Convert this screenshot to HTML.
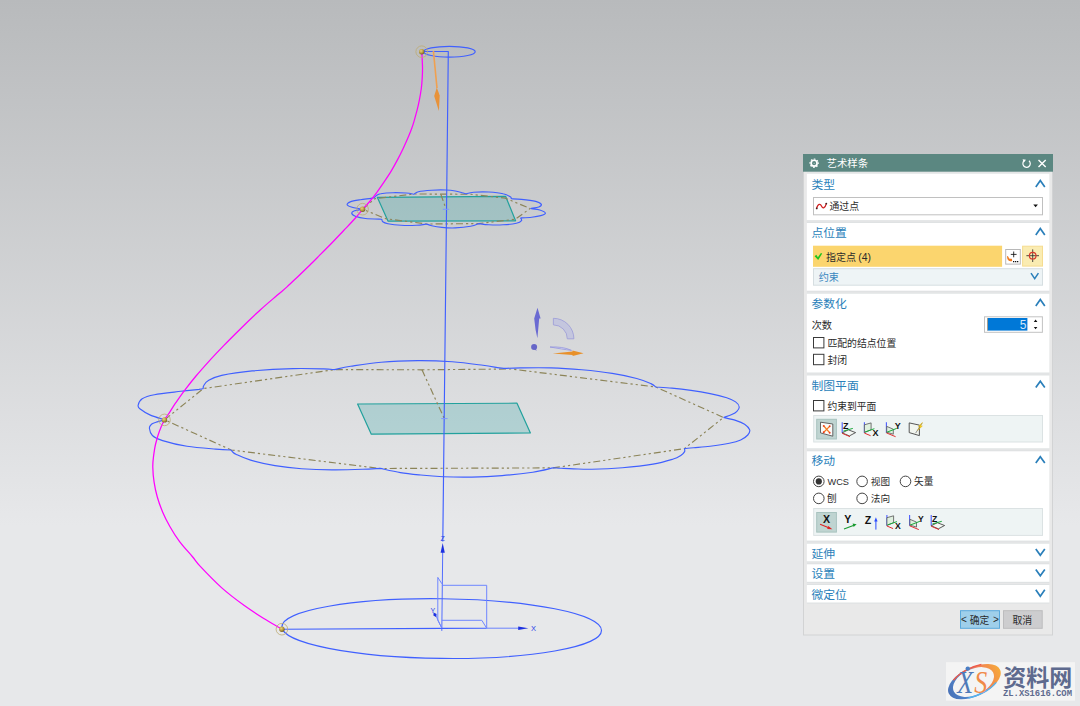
<!DOCTYPE html>
<html><head><meta charset="utf-8"><title>NX</title>
<style>html,body{margin:0;padding:0;background:#e8e9ea;overflow:hidden}body{width:1080px;height:706px;font-family:"Liberation Sans",sans-serif}svg{display:block}</style>
</head><body>
<svg width="1080" height="706" viewBox="0 0 1080 706">
<defs><linearGradient id="bg" x1="0" y1="0" x2="0" y2="1">
<stop offset="0" stop-color="#b8babc"/><stop offset=".745" stop-color="#e7e8ea"/><stop offset="1" stop-color="#e7e8ea"/></linearGradient></defs>
<rect width="1080" height="706" fill="url(#bg)"/>
<g fill="none" stroke-linecap="butt" stroke-linejoin="round">
<path d="M377.3 197.3L505.6 196.3L515.6 220.8L388.1 221.2Z" fill="rgba(0,150,150,.2)" stroke="#22a19d" stroke-width="1.2"/>
<path d="M357.6 404L517 403.2L530.4 432.9L371.3 434.2Z" fill="rgba(0,150,150,.2)" stroke="#22a19d" stroke-width="1.2"/>
<g stroke="#8c8458" stroke-width="1.15" stroke-dasharray="7 3 2.2 3 2.2 3">
<path d="M164.6 419.8L203.3 388.6L334.4 369.6L422 369.8L511 369L655.7 387L723.5 417.5L684.4 448.6L553 467.9L380 468.5L231.2 450Z"/>
<path d="M422 369.8L444.3 418.5"/>
<path d="M362.6 209.2L374.6 198.8L413.8 194L440.8 194.1L470.6 194.3L505.2 198.1L530.1 208.5L515.4 219.2L478.7 223.6L426.6 224L385.8 218.7Z"/>
<path d="M440.8 194.3L445.9 208.5"/>
</g>
<g stroke="#4060ff" stroke-width="1.15">
<path d="M164.6 419.8C162.2 419 154.5 416.9 150.4 415.1C146.3 413.3 142.2 410.6 140.2 409C138.1 407.4 137.8 407.2 138.1 405.5C138.4 403.8 139.5 400.6 142.2 398.8C144.9 397 147.9 395.9 154.4 394.7C160.9 393.4 173.5 392.2 180.9 391.3C188.3 390.4 195.3 389.8 199 389.4C202.7 388.9 202.6 388.7 203.3 388.6M203.3 388.6C203.4 388.1 202.8 387 203.7 385.6C204.5 384.2 205.4 382.2 208.4 380.5C211.4 378.8 214.4 377 221.7 375.4C229 373.8 240.3 372 252.2 370.9C264.1 369.8 281.1 368.9 293 368.6C304.9 368.3 316.6 368.7 323.5 368.9C330.4 369.1 332.6 369.5 334.4 369.6M334.4 369.6C337.1 369.1 342.8 367.5 350.6 366.3C358.4 365.1 369.9 363.1 381.1 362.2C392.3 361.2 405.9 360.7 417.8 360.6C429.7 360.5 441.5 361 452.4 361.8C463.3 362.6 475.2 364.3 483 365.3C490.8 366.3 495.7 367.4 499.3 367.9C502.9 368.4 503.7 368.3 504.6 368.4M504.6 368.4C507.3 368.3 512.9 368 520.6 367.9C528.4 367.8 540.9 367.6 551.1 367.9C561.3 368.2 571.5 368.9 581.7 369.8C591.9 370.7 603 371.9 612.2 373.4C621.4 374.8 630.2 376.8 636.7 378.5C643.2 380.2 647.7 382.2 650.9 383.6C654.1 385 654.9 386.4 655.7 387M655.7 387C658.4 387.2 666 387.5 671.9 388.1C677.8 388.7 684.6 389.5 691 390.4C697.4 391.3 704.1 392.4 710.1 393.6C716.1 394.8 722.5 396.4 726.7 397.8C731 399.2 733.5 400.4 735.6 401.9C737.7 403.4 739 405.4 739.2 407C739.4 408.6 738.1 410.1 736.9 411.4C735.7 412.7 734 413.6 731.8 414.6C729.6 415.6 724.9 417 723.5 417.5M723.5 417.5C725.5 418 732.1 419.3 735.6 420.4C739.1 421.5 742.2 422.6 744.6 424.2C747 425.8 749.2 428.1 749.7 429.9C750.2 431.7 749.3 433.3 747.8 435C746.3 436.7 743.8 438.5 740.7 439.9C737.6 441.3 734.4 442.2 729.3 443.3C724.2 444.4 716 445.6 710.1 446.3C704.2 447.1 697.9 447.4 693.6 447.8C689.3 448.2 685.9 448.5 684.4 448.6M684.4 448.6C684.4 449.1 685.2 450.5 684.6 451.6C684 452.7 682.7 454.2 680.8 455.4C678.9 456.6 677.9 457.6 673.3 459C668.7 460.4 661.5 462.7 653 464.1C644.5 465.6 632.6 466.9 622.4 467.7C612.2 468.5 600 469 591.9 469.2C583.8 469.4 578.6 469 573.5 468.9C568.4 468.8 564.7 468.5 561.3 468.3C557.9 468.1 554.4 468 553 467.9M553 467.9C549.6 468.6 541.3 470.9 532.8 472.2C524.3 473.5 512.4 474.8 502.2 475.6C492 476.4 481.5 476.9 471.7 477.1C461.9 477.3 451.6 477.1 443.1 476.7C434.6 476.3 427.8 475.7 420.7 475C413.6 474.3 407.1 473.7 400.4 472.6C393.7 471.5 383.8 469.1 380.5 468.4M380.5 468.4C377.5 468.5 370.7 469.1 362.6 469.3C354.5 469.6 342.2 470 332 469.9C321.8 469.8 311 469.4 301.5 468.7C292 468 283.5 467 275 465.6C266.5 464.2 257.1 462 250.6 460.1C244.2 458.2 239.3 455.8 236.3 454.4C233.3 453 233.3 452.5 232.5 451.8C231.7 451.1 231.4 450.3 231.2 450M231.2 450C228.6 449.9 223 449.7 215.6 449.1C208.2 448.5 195.8 447.7 187 446.3C178.2 444.9 168.4 442.4 162.6 440.6C156.8 438.8 154.6 437.6 152.4 435.5C150.2 433.4 149.6 430.2 149.4 428.3C149.2 426.4 150.4 425.3 151.5 424.3C152.6 423.3 153.8 423.1 156 422.3C158.2 421.6 163.2 420.2 164.6 419.8"/>
<path d="M362.6 209.2C361.2 209 356.6 208.5 354 207.8C351.4 207.1 347.9 206 347.3 205C346.7 204 348 202.8 350.2 201.9C352.4 201 356.9 200.3 360.4 199.7C363.9 199.1 368.7 198.8 371 198.4C373.3 198.1 373.8 197.7 374.4 197.6M374.4 197.6C374.8 197.2 375.4 196.1 376.5 195.5C377.6 194.9 377.9 194.2 380.7 193.8C383.4 193.3 388.8 192.8 393 192.7C397.2 192.6 402.7 192.8 406.2 193C409.7 193.2 412.8 194 414.1 194.2M414.1 194.2C414.8 193.8 415.5 192.4 418.4 191.7C421.3 191 427.1 190.5 431.7 190.2C436.3 189.9 442 189.9 445.9 190C449.8 190.1 452.6 190.5 455.3 191C458 191.5 460.2 192.3 462 192.8C463.8 193.3 465.3 193.6 466 193.8M466 193.8C467.3 193.5 469.8 192.5 473.6 192.2C477.4 191.9 484 191.7 488.9 192C493.8 192.3 499.5 192.9 503.1 193.8C506.7 194.6 508.9 196 510.3 196.8C511.7 197.6 511.1 198.5 511.3 198.8M511.3 198.8C513 198.9 517.4 199 521.5 199.4C525.6 199.8 532.4 200.6 535.7 201.4C539 202.2 540.8 203.5 541.3 204.4C541.8 205.3 540.6 206.3 538.8 207C537 207.7 532 208.2 530.6 208.5M530.6 208.5C532.1 208.8 537.3 209.2 539.8 210C542.3 210.8 545.2 212.2 545.4 213.1C545.6 214 543.1 214.9 540.8 215.6C538.5 216.3 535.1 216.8 531.7 217.2C528.3 217.6 522.4 217.8 520.5 217.9M520.5 217.9C520.7 218.4 522.2 219.8 521.5 220.7C520.8 221.6 519.5 222.6 516.4 223.3C513.3 224 507.7 224.6 503.1 224.8C498.5 225.1 493 225 488.9 224.8C484.8 224.6 480.4 223.8 478.7 223.6M478.7 223.6C477.4 224.1 474.5 225.6 470.6 226.3C466.7 227 460.1 227.7 455.3 227.9C450.5 228.1 445.8 227.8 441.9 227.4C438 227.1 434.2 226.4 431.7 225.8C429.1 225.2 427.5 224.3 426.6 224M426.6 224C424.9 224.2 420.6 225.1 416.4 225.3C412.1 225.5 405.9 225.6 401.1 225.3C396.4 225.1 390.9 224.4 387.9 223.8C384.8 223.2 383.8 222.6 382.8 221.8C381.8 221 382 219.6 381.8 219.2M381.8 219.2C379.1 219.1 369.9 219 365.5 218.5C361.1 218 357.6 217.1 355.3 216.2C353 215.3 351.8 214 351.7 213.1C351.6 212.2 352.7 211.5 354.5 210.8C356.3 210.2 361.2 209.5 362.6 209.2"/>
<ellipse cx="449.4" cy="51.7" rx="25.8" ry="5.4"/>
<path d="M424 51.5L448.3 51.5L442.8 541.5"/>
<path d="M442.7 552L441.8 630.9" stroke="#4a66ff" stroke-width=".95"/>
<circle r="1" transform="matrix(159.8 1.84 0 29.84 441.7 628.6)" vector-effect="non-scaling-stroke"/>
<path d="M282 629.2L441.8 628.3L486.7 628.2"/>
<path d="M486.7 628.2L518.5 628.2" stroke="#5f78ff" stroke-width=".9"/>
</g>
<g stroke="#6f86ff" stroke-width="1">
<path d="M441.9 585.3L486.7 585.3L486.7 628.2M437.8 577.4L441.9 583.8M437.8 577.4L437.8 620.3L441.9 628.2M441.9 620.3L481.8 620.3L486.7 628.2M435.4 614.6L441.5 627.5"/>
<path d="M442.8 209.3L449.2 209.3M441.2 418.6L447.6 418.6" stroke="#7f97ff"/>
</g>
<path d="M518.2 626.4L528.4 628.2L518.2 630Z" fill="#1c30e0"/>
<path d="M442.7 543L444.8 552.8L440.6 552.8Z" fill="#1c30e0"/>
<path d="M433.6 612.5L436.6 614L436 617L433.4 615.5Z" fill="#1c30e0"/>
</g>
<g font-family="Liberation Sans, sans-serif" font-size="7.5" fill="#2a3fe8"><text x="530.9" y="631.4">X</text><text x="440.4" y="540.8" font-size="7">Z</text><text x="430.6" y="613" font-size="7">Y</text></g>
<path d="M421.9 53C422 55.3 422.4 62.8 422.5 67C422.6 71.2 422.4 74.7 422.2 78.3C422 81.9 421.8 84.9 421.3 88.5C420.8 92.1 420.1 96.3 419.4 99.9C418.7 103.5 418 106.7 417.1 110.1C416.2 113.5 415.2 117.1 414.3 120.3C413.4 123.5 412.4 126.6 411.4 129.3C410.4 132 409.8 133.4 408.5 136.5C407.2 139.6 405.2 144.1 403.4 147.9C401.6 151.7 399.7 155.6 397.7 159.4C395.7 163.2 393.5 167.2 391.3 170.9C389.1 174.6 386.7 178.1 384.3 181.7C381.9 185.3 379.1 189.3 376.7 192.6C374.3 195.9 372 198.7 369.7 201.5C367.4 204.3 365.2 206.4 362.8 209.2C360.4 212 358.2 214.9 355 218.5C351.8 222.1 347.5 226.5 343.7 230.5C339.9 234.5 336.1 238.6 332.3 242.5C328.5 246.4 324.8 250.1 321 253.9C317.2 257.7 313.5 261.5 309.7 265.2C305.9 268.9 302.1 272.6 298.3 276.2C294.5 279.8 290.5 283.7 287 286.9C283.5 290.1 281.5 291.5 277.1 295.3C272.7 299.1 266.3 304.4 260.5 309.7C254.7 315 248.2 321.2 242.1 327.2C236 333.2 229.2 339.9 223.7 345.6C218.2 351.3 213.5 356.2 208.9 361.3C204.3 366.4 200 371.2 196 376C192 380.8 188.4 385.4 185 389.8C181.6 394.2 178.4 398.9 175.8 402.7C173.2 406.5 171.2 410 169.3 412.9C167.4 415.8 166.2 416.8 164.5 419.8C162.8 422.9 160.9 427.2 159.4 431.2C157.9 435.2 156.6 439.8 155.6 444C154.6 448.2 154 452.8 153.5 456.7C153 460.6 152.7 463.1 152.8 467.3C152.9 471.6 153.3 477.2 154.1 482.2C154.8 487.1 155.9 492.1 157.3 497C158.7 501.9 160.5 506.9 162.6 511.9C164.7 516.9 167.2 521.8 170 526.7C172.8 531.7 175.9 536.6 179.6 541.6C183.3 546.6 188.9 552.4 192.3 556.5C195.8 560.6 195.4 561.2 200.3 566.4C205.2 571.6 214.2 581.1 221.5 587.6C228.8 594.1 237.2 600.4 244.3 605.5C251.4 610.6 257.6 614.6 263.8 618.5C270 622.4 278.6 627.2 281.5 629" fill="none" stroke="#ff00ff" stroke-width="1.25"/>
<path d="M433.4 51L437 88" stroke="#f0a050" stroke-width="1.6" fill="none"/>
<path d="M436.8 87.5L439.7 95.5L438.9 111L434.2 96Z" fill="#e8923a"/>
<defs><radialGradient id="gb" cx=".38" cy=".35" r=".7"><stop offset="0" stop-color="#ecd27a"/><stop offset=".55" stop-color="#b89a3e"/><stop offset="1" stop-color="#6e5a20"/></radialGradient></defs>
<circle cx="421.7" cy="51.7" r="5.8" fill="none" stroke="#bcab72" stroke-width=".8"/>
<circle cx="421.7" cy="51.7" r="2.7" fill="url(#gb)"/>
<circle cx="362.6" cy="209.2" r="5.8" fill="none" stroke="#bcab72" stroke-width=".8"/>
<circle cx="362.6" cy="209.2" r="2.7" fill="url(#gb)"/>
<circle cx="164.5" cy="419.9" r="5.8" fill="none" stroke="#bcab72" stroke-width=".8"/>
<circle cx="164.5" cy="419.9" r="2.7" fill="url(#gb)"/>
<circle cx="281.9" cy="629.2" r="5.8" fill="none" stroke="#bcab72" stroke-width=".8"/>
<circle cx="281.9" cy="629.2" r="2.7" fill="url(#gb)"/>
<path d="M537.5 307.7L540.6 318.6L539.2 318.6L537.4 338.2L535.6 330L534.2 318.6Z" fill="#6a6ad2"/>
<path d="M553.4 318.3A20.5 20.5 0 0 1 573.9 338.8L567.3 338.8A13.9 13.9 0 0 0 553.4 324.9Z" fill="#c4c6de" stroke="#9a9ad8" stroke-width=".8"/>
<circle cx="534.1" cy="347" r="3" fill="#6666c8"/><path d="M534.5 349L536.5 351L535.8 348Z" fill="#6666c8"/>
<path d="M550 347C558 346.6 566 347.6 571.5 350.4C565 349.6 558 348.4 550 347Z" fill="#d5d8ee" stroke="#8c8cdc" stroke-width=".7"/>
<path d="M552.7 353.5L572.6 351.6L572.4 350.6L583.6 353.2L572.6 355.9L572.6 354.9Z" fill="#e8902a"/>
<rect x="803.5" y="154.5" width="249" height="480.5" fill="#e9e9e9" stroke="#d2d3d4" stroke-width="1" />
<rect x="803" y="154" width="250" height="17.7" fill="#5b8781" />
<rect x="806.8" y="172.5" width="242.6" height="48.9" fill="#dfe2e3" />
<rect x="806.8" y="173.7" width="242.6" height="46.5" fill="#fff" />
<rect x="806.8" y="221.8" width="242.6" height="70.1" fill="#dfe2e3" />
<rect x="806.8" y="223" width="242.6" height="67.7" fill="#fff" />
<rect x="806.8" y="292.5" width="242.6" height="81.2" fill="#dfe2e3" />
<rect x="806.8" y="293.7" width="242.6" height="78.8" fill="#fff" />
<rect x="806.8" y="374.3" width="242.6" height="75.2" fill="#dfe2e3" />
<rect x="806.8" y="375.5" width="242.6" height="72.8" fill="#fff" />
<rect x="806.8" y="450.1" width="242.6" height="91.7" fill="#dfe2e3" />
<rect x="806.8" y="451.3" width="242.6" height="89.3" fill="#fff" />
<rect x="806.8" y="542.5" width="242.6" height="20" fill="#dfe2e3" />
<rect x="806.8" y="543.7" width="242.6" height="17.6" fill="#fff" />
<rect x="806.8" y="563.1" width="242.6" height="19.9" fill="#dfe2e3" />
<rect x="806.8" y="564.3" width="242.6" height="17.5" fill="#fff" />
<rect x="806.8" y="583.8" width="242.6" height="19.9" fill="#dfe2e3" />
<rect x="806.8" y="585" width="242.6" height="17.5" fill="#fff" />
<circle cx="814.1" cy="163.2" r="2.95" fill="none" stroke="#fff" stroke-width="1.7"/>
<circle cx="814.1" cy="163.2" r="4.15" fill="none" stroke="#fff" stroke-width="1.1" stroke-dasharray="1.63 1.63" transform="rotate(-11 814.1 163.2)"/>
<circle cx="814.1" cy="163.2" r=".5" fill="#dfe9e7"/>
<text x="826.5" y="167.3" font-family="'Liberation Sans', 'Noto Sans CJK SC', sans-serif" font-size="10.4" fill="#fff">艺术样条</text>
<path d="M1024.4 160.6A3.7 3.7 0 1 0 1029 160.8" fill="none" stroke="#fff" stroke-width="1.2"/><path d="M1022.6 159.2L1026 159.8L1023.8 162.4Z" fill="#fff"/>
<path d="M1038.5 159.9L1045.7 167.1M1045.7 159.9L1038.5 167.1" stroke="#fff" stroke-width="1.4"/>
<text x="811.5" y="189.1" font-family="'Liberation Sans', 'Noto Sans CJK SC', sans-serif" font-size="11.8" fill="#2a7fba">类型</text>
<path d="M1035.8 186.9 L1040.3 180.5 L1044.8 186.9" fill="none" stroke="#2a7fba" stroke-width="1.7"/>
<text x="811.5" y="237.1" font-family="'Liberation Sans', 'Noto Sans CJK SC', sans-serif" font-size="11.8" fill="#2a7fba">点位置</text>
<path d="M1035.8 234.9 L1040.3 228.5 L1044.8 234.9" fill="none" stroke="#2a7fba" stroke-width="1.7"/>
<text x="811.5" y="308.1" font-family="'Liberation Sans', 'Noto Sans CJK SC', sans-serif" font-size="11.8" fill="#2a7fba">参数化</text>
<path d="M1035.8 305.9 L1040.3 299.5 L1044.8 305.9" fill="none" stroke="#2a7fba" stroke-width="1.7"/>
<text x="811.5" y="389.7" font-family="'Liberation Sans', 'Noto Sans CJK SC', sans-serif" font-size="11.8" fill="#2a7fba">制图平面</text>
<path d="M1035.8 387.6 L1040.3 381.2 L1044.8 387.6" fill="none" stroke="#2a7fba" stroke-width="1.7"/>
<text x="811.5" y="465.3" font-family="'Liberation Sans', 'Noto Sans CJK SC', sans-serif" font-size="11.8" fill="#2a7fba">移动</text>
<path d="M1035.8 463.1 L1040.3 456.7 L1044.8 463.1" fill="none" stroke="#2a7fba" stroke-width="1.7"/>
<text x="811.5" y="557.9" font-family="'Liberation Sans', 'Noto Sans CJK SC', sans-serif" font-size="11.8" fill="#2a7fba">延伸</text>
<path d="M1035.8 548.9 L1040.3 555.3 L1044.8 548.9" fill="none" stroke="#2a7fba" stroke-width="1.7"/>
<text x="811.5" y="578.3" font-family="'Liberation Sans', 'Noto Sans CJK SC', sans-serif" font-size="11.8" fill="#2a7fba">设置</text>
<path d="M1035.8 569.4 L1040.3 575.8 L1044.8 569.4" fill="none" stroke="#2a7fba" stroke-width="1.7"/>
<text x="811.5" y="598.8" font-family="'Liberation Sans', 'Noto Sans CJK SC', sans-serif" font-size="11.8" fill="#2a7fba">微定位</text>
<path d="M1035.8 589.8 L1040.3 596.2 L1044.8 589.8" fill="none" stroke="#2a7fba" stroke-width="1.7"/>
<rect x="813.5" y="197.5" width="229" height="17.3" fill="#fff" stroke="#c0c0c0" stroke-width="1" />
<path d="M816.6 208.6C818 203.2 820.4 203.6 821.6 206.2C822.8 208.8 825 208.4 826.4 203.4" fill="none" stroke="#d02020" stroke-width="1.3"/>
<circle cx="816.7" cy="208.4" r=".9" fill="#402020"/><circle cx="826.3" cy="203.6" r=".9" fill="#402020"/>
<text x="829.4" y="209.7" font-family="'Liberation Sans', 'Noto Sans CJK SC', sans-serif" font-size="9.9" fill="#2b2b2b">通过点</text>
<path d="M1033.3 204.6L1037.9 204.6L1035.6 207.3Z" fill="#111"/>
<rect x="813" y="245.7" width="189.1" height="21.1" fill="#fbd56e" />
<path d="M814.6 256.2L816.3 254.8L817.9 257.2L820.9 252.9L822.2 253.6L818.2 260.1Z" fill="#1fc41f"/>
<text x="825.9" y="260.7" font-family="'Liberation Sans', 'Noto Sans CJK SC', sans-serif" font-size="10" fill="#2b2b2b">指定点</text>
<text x="858.3" y="260.6" font-family="Liberation Sans, sans-serif" font-size="10.4" fill="#2b2b2b">(4)</text>
<rect x="1005.7" y="249.5" width="14.6" height="14.6" fill="#fff" stroke="#b8b8b8" stroke-width="1" />
<path d="M1010.8 254.4L1016.6 254.4M1013.7 251.5L1013.7 257.3" stroke="#111" stroke-width=".85"/>
<path d="M1013 261.1h1.3v1.2h-1.3zM1015 261.1h1.3v1.2h-1.3zM1017 261.1h1.3v1.2h-1.3z" fill="#111"/>
<path d="M1007.6 256.6C1007.6 259.6 1009 261 1011.6 260.6L1011.4 259.2L1009.6 259.4C1008.6 259 1008.2 258 1007.6 256.6Z" fill="#f07a20" stroke="#f07a20" stroke-width="1.1" stroke-linejoin="round"/>
<rect x="1022.6" y="246.2" width="19.9" height="19.9" fill="#faecb2" stroke="#f6dc90" stroke-width="1" />
<path d="M1026.4 255.7L1039 255.7M1032.7 249.4L1032.7 262" stroke="#2a2a2a" stroke-width=".85"/><circle cx="1032.7" cy="255.7" r="3.3" fill="none" stroke="#d8392b" stroke-width="1.2"/>
<rect x="813.5" y="268.7" width="229" height="16.5" fill="#eef4f6" stroke="#d6dee1" stroke-width="1" />
<text x="818.7" y="280.7" font-family="'Liberation Sans', 'Noto Sans CJK SC', sans-serif" font-size="10.1" fill="#3a87bf">约束</text>
<path d="M1031 273.2 L1034.7 278.6 L1038.4 273.2" fill="none" stroke="#2a7fba" stroke-width="1.5"/>
<text x="811.7" y="328.5" font-family="'Liberation Sans', 'Noto Sans CJK SC', sans-serif" font-size="10.2" fill="#2b2b2b">次数</text>
<rect x="984.5" y="316.8" width="57.9" height="15.5" fill="#fff" stroke="#c2c2c2" stroke-width="1" />
<rect x="987.2" y="318" width="40.2" height="12.6" fill="#0078d7" />
<rect x="987.2" y="318" width="0.6" height="12.6" fill="#f0a860" />
<text x="1026.5" y="328.6" text-anchor="end" font-family="Liberation Sans, sans-serif" font-size="12" fill="#d4e7f8">5</text>
<path d="M1033.8 321.9L1037.4 321.9L1035.6 319.6ZM1033.8 327L1037.4 327L1035.6 329.3Z" fill="#111"/>
<rect x="813.5" y="337.5" width="10.4" height="10.4" fill="#fff" stroke="#3a3a3a" stroke-width="1" />
<text x="827.4" y="346.6" font-family="'Liberation Sans', 'Noto Sans CJK SC', sans-serif" font-size="9.85" fill="#2b2b2b">匹配的结点位置</text>
<rect x="813.5" y="354.3" width="10.4" height="10.4" fill="#fff" stroke="#3a3a3a" stroke-width="1" />
<text x="827.4" y="363.6" font-family="'Liberation Sans', 'Noto Sans CJK SC', sans-serif" font-size="9.85" fill="#2b2b2b">封闭</text>
<rect x="813.5" y="400.5" width="10.4" height="10.4" fill="#fff" stroke="#3a3a3a" stroke-width="1" />
<text x="827.4" y="409.7" font-family="'Liberation Sans', 'Noto Sans CJK SC', sans-serif" font-size="9.75" fill="#2b2b2b">约束到平面</text>
<rect x="813.7" y="415.5" width="228.8" height="26.5" fill="#eef4f4" stroke="#dbe2e3" stroke-width="1" />
<rect x="813.7" y="508.5" width="228.8" height="26.9" fill="#eef4f4" stroke="#dbe2e3" stroke-width="1" />
<rect x="816.7" y="419.3" width="19.7" height="19.7" fill="#bfd4d1" stroke="#a8c3bf" stroke-width="1" />
<rect x="816.7" y="512.5" width="19.7" height="19.6" fill="#bfd4d1" stroke="#a8c3bf" stroke-width="1" />
<path d="M820.5 422.2L832.8 424L832.8 436.2L820.5 432.9Z" fill="#fafaf8" stroke="#555" stroke-width=".9"/>
<path d="M823.8 426L829.6 432.6M829.6 426.4L823.8 432.2" stroke="#f47a20" stroke-width="1.25"/><circle cx="823.7" cy="425.9" r=".95" fill="#ee3a1a"/><circle cx="829.7" cy="432.7" r=".95" fill="#ee3a1a"/><circle cx="829.7" cy="426.3" r=".95" fill="#ee3a1a"/><circle cx="823.7" cy="432.3" r=".95" fill="#ee3a1a"/>
<path d="M842.2 422.2L842.2 432.9" stroke="#4a5cff" stroke-width="1.1"/><path d="M842.2 432.9L848.3 429.8L855.6 432.6L849.4 435.9Z" fill="#f4f8f4" stroke="#333" stroke-width=".8"/><path d="M843.3 431.1L852.8 428.4" stroke="#1aa83a" stroke-width="1"/><path d="M842.2 433.3L850 436.7" stroke="#e03030" stroke-width="1"/><text x="843.1" y="428.8" font-family="Liberation Sans, sans-serif" font-weight="bold" font-size="9" fill="#111">Z</text>
<path d="M864.4 422.2L864.4 432.9" stroke="#4a5cff" stroke-width="1.1"/><path d="M864.4 424.8L871.1 422.9L871.1 429.8L864.4 432.6Z" fill="#dff0df" stroke="#555" stroke-width=".8"/><path d="M865 432L874.4 428.7" stroke="#1aa83a" stroke-width="1"/><path d="M864.4 433.1L870.6 435.7" stroke="#e03030" stroke-width="1"/><text x="872.6" y="436.3" font-family="Liberation Sans, sans-serif" font-weight="bold" font-size="9" fill="#111">X</text>
<path d="M886.4 422.2L886.4 432.9" stroke="#4a5cff" stroke-width="1.1"/><path d="M886.7 426.4L893.3 429.2L893.3 434.2L886.7 432.2Z" fill="#dff0df" stroke="#555" stroke-width=".8"/><path d="M886.7 432.3L896.7 428.4" stroke="#1aa83a" stroke-width="1"/><path d="M886.4 432.9L895.6 436.7" stroke="#e03030" stroke-width="1"/><text x="894.8" y="428.8" font-family="Liberation Sans, sans-serif" font-weight="bold" font-size="9" fill="#111">Y</text>
<path d="M909.2 422.9L919.4 425.1L919.4 435.6L909.2 432.6Z" fill="#f2f6f0" stroke="#444" stroke-width=".9"/>
<path d="M922.2 423L915.6 433.2" stroke="#666" stroke-width=".7"/><path d="M922.6 422.4L918.4 426.2L920.2 426.8L917.6 430.4L922.4 426L920.4 425.4Z" fill="#f6cc1e" stroke="#dcae08" stroke-width=".4"/>
<text x="822.9" y="523" font-family="Liberation Sans, sans-serif" font-weight="bold" font-size="10.6" fill="#111">X</text>
<path d="M820.1 524.2L830 528.2" stroke="#e02020" stroke-width="1.1"/><path d="M828.2 526L832.4 529.2L827.2 529Z" fill="#e02020"/>
<text x="844.2" y="523" font-family="Liberation Sans, sans-serif" font-weight="bold" font-size="10.6" fill="#111">Y</text>
<path d="M844 529L854 525.2" stroke="#189a30" stroke-width="1.1"/><path d="M852.6 523.6L856.6 524.2L853.6 527Z" fill="#189a30"/>
<text x="864.7" y="523.6" font-family="Liberation Sans, sans-serif" font-weight="bold" font-size="10.6" fill="#111">Z</text>
<path d="M875.9 529.6L875.9 520" stroke="#2a4cff" stroke-width="1"/><path d="M874.2 521.4L875.9 517.2L877.6 521.4Z" fill="#2a4cff"/>
<path d="M886.9 515.1L886.9 525.8" stroke="#4a5cff" stroke-width="1.1"/><path d="M886.9 517.7L893.6 515.8L893.6 522.7L886.9 525.5Z" fill="#dff0df" stroke="#555" stroke-width=".8"/><path d="M887.5 524.9L896.9 521.6" stroke="#1aa83a" stroke-width="1"/><path d="M886.9 526L893.1 528.6" stroke="#e03030" stroke-width="1"/><text x="895.1" y="529.2" font-family="Liberation Sans, sans-serif" font-weight="bold" font-size="8.6" fill="#111">X</text>
<path d="M909.6 515.1L909.6 525.8" stroke="#4a5cff" stroke-width="1.1"/><path d="M909.9 519.3L916.5 522.1L916.5 527.1L909.9 525.1Z" fill="#dff0df" stroke="#555" stroke-width=".8"/><path d="M909.9 525.2L919.9 521.3" stroke="#1aa83a" stroke-width="1"/><path d="M909.6 525.8L918.8 529.6" stroke="#e03030" stroke-width="1"/><text x="918" y="521.7" font-family="Liberation Sans, sans-serif" font-weight="bold" font-size="8.6" fill="#111">Y</text>
<path d="M931.2 515.1L931.2 525.8" stroke="#4a5cff" stroke-width="1.1"/><path d="M931.2 525.8L937.3 522.7L944.6 525.5L938.4 528.8Z" fill="#f4f8f4" stroke="#333" stroke-width=".8"/><path d="M932.3 524L941.8 521.3" stroke="#1aa83a" stroke-width="1"/><path d="M931.2 526.2L939 529.6" stroke="#e03030" stroke-width="1"/><text x="932.1" y="521.7" font-family="Liberation Sans, sans-serif" font-weight="bold" font-size="8.6" fill="#111">Z</text>
<circle cx="818.8" cy="481.4" r="5.3" fill="#fff" stroke="#444" stroke-width="1"/><circle cx="818.8" cy="481.4" r="3.1" fill="#333"/>
<text x="827.5" y="485.1" font-family="Liberation Sans, sans-serif" font-size="9.9" textLength="21.5" lengthAdjust="spacingAndGlyphs" fill="#2b2b2b">WCS</text>
<circle cx="862.1" cy="481.4" r="5.3" fill="#fff" stroke="#444" stroke-width="1"/>
<text x="870.8" y="485.3" font-family="'Liberation Sans', 'Noto Sans CJK SC', sans-serif" font-size="9.6" fill="#2b2b2b">视图</text>
<circle cx="905.5" cy="481.4" r="5.3" fill="#fff" stroke="#444" stroke-width="1"/>
<text x="914.1" y="485.4" font-family="'Liberation Sans', 'Noto Sans CJK SC', sans-serif" font-size="9.7" fill="#2b2b2b">矢量</text>
<circle cx="818.8" cy="498.4" r="5.3" fill="#fff" stroke="#444" stroke-width="1"/>
<text x="827.1" y="502.4" font-family="'Liberation Sans', 'Noto Sans CJK SC', sans-serif" font-size="9.7" fill="#2b2b2b">刨</text>
<circle cx="862.1" cy="498.4" r="5.3" fill="#fff" stroke="#444" stroke-width="1"/>
<text x="870.8" y="502.4" font-family="'Liberation Sans', 'Noto Sans CJK SC', sans-serif" font-size="9.6" fill="#2b2b2b">法向</text>
<rect x="960.5" y="610.7" width="39" height="17.6" fill="#9fcfea" stroke="#5aa9dc" stroke-width="1" />
<rect x="1003.5" y="610.7" width="38.7" height="17.6" fill="#cdcdcf" stroke="#bcbcbe" stroke-width="1" />
<text x="969.7" y="623.6" font-family="'Liberation Sans', 'Noto Sans CJK SC', sans-serif" font-size="9.8" fill="#2b2b2b">确定</text>
<text x="961" y="623.2" font-family="Liberation Sans, sans-serif" font-size="10" fill="#2b2b2b">&lt;</text><text x="993" y="623.2" font-family="Liberation Sans, sans-serif" font-size="10" fill="#2b2b2b">&gt;</text>
<text x="1012.4" y="623.7" font-family="'Liberation Sans', 'Noto Sans CJK SC', sans-serif" font-size="9.9" fill="#2b2b2b">取消</text>
<rect x="946" y="662.2" width="129" height="38.5" fill="#f4f4f4" />
<defs><linearGradient id="wg" x1="0" y1="0" x2="1" y2="0"><stop offset="0" stop-color="#4a72b8"/><stop offset=".45" stop-color="#4f8fd6"/><stop offset=".62" stop-color="#f0785a"/><stop offset="1" stop-color="#f6aa3a"/></linearGradient></defs>
<g transform="rotate(-25 974.4 681.6)"><path d="M946.1 681.6A28.3 14.4 0 1 1 1002.7 681.6A28.3 14.4 0 1 1 946.1 681.6ZM951.6 682.2A21.8 12.9 0 1 0 995.2 681A21.8 12.9 0 1 0 951.6 682.2Z" fill="url(#wg)" fill-rule="evenodd"/><path d="M956 671.5A28.3 14.4 0 0 1 988 669" fill="none" stroke="#ee5a4a" stroke-width="1.3"/><path d="M962 694A28.3 14.4 0 0 0 994 691.5" fill="none" stroke="#56b4ee" stroke-width="1.3"/></g>
<circle cx="967.8" cy="668.6" r="2.2" fill="#4a7fc4"/>
<g font-family="Liberation Serif, serif" font-style="italic" font-size="32.5"><text transform="translate(957.2 692.8) scale(.8 1)" fill="#4f7ab8">X</text><text transform="translate(974.2 692.8) scale(.8 1)" fill="#f08a48">S</text></g>
<text x="1003.2" y="685.8" font-family="'Liberation Sans', 'Noto Sans CJK SC', sans-serif" font-weight="bold" font-size="23" textLength="69" lengthAdjust="spacingAndGlyphs" fill="#5e6a8e">资料网</text>
<text x="1003" y="695.9" font-family="Liberation Mono, monospace" font-weight="bold" font-size="8.8" textLength="69" lengthAdjust="spacingAndGlyphs" fill="#5e6a8e">ZL.XS1616.COM</text>
</svg>
</body></html>
